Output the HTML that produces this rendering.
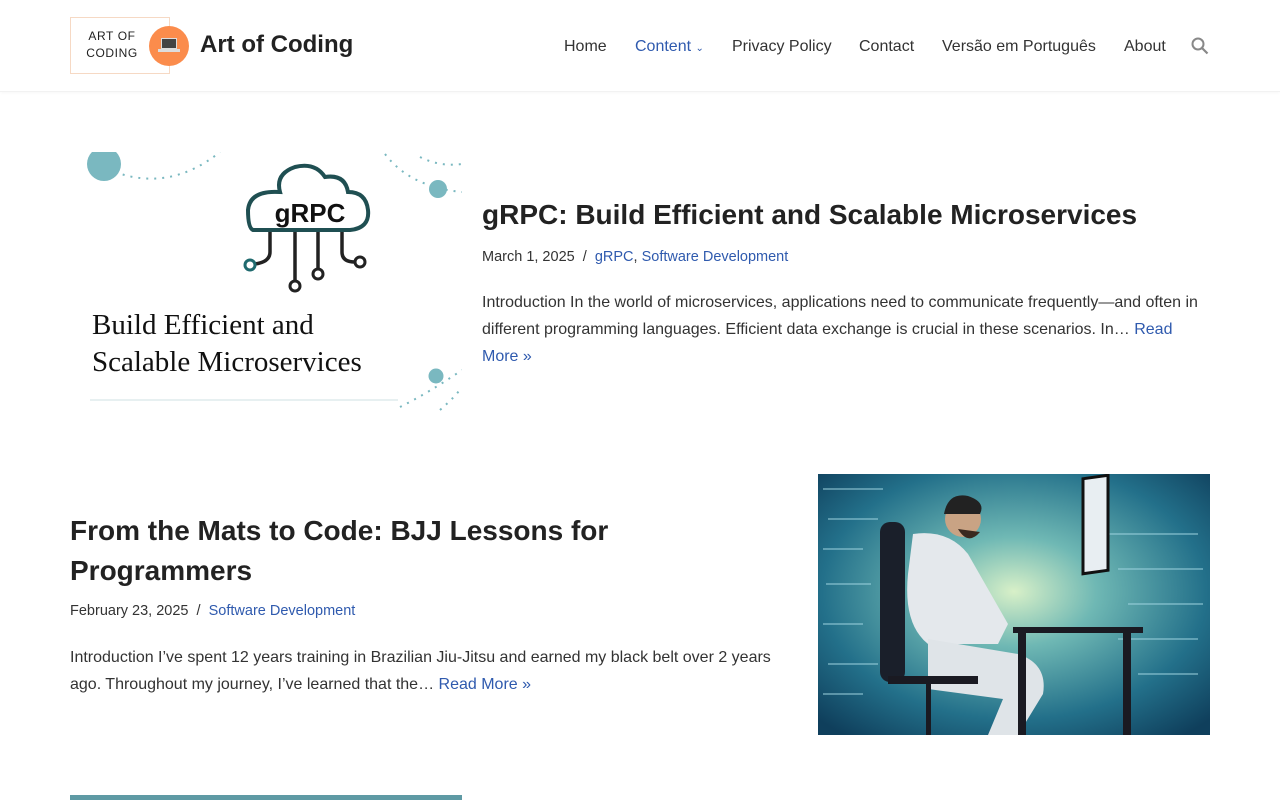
<!DOCTYPE html>
<html><head><meta charset="utf-8"><style>
*{margin:0;padding:0;box-sizing:border-box}
body{width:1280px;height:800px;overflow:hidden;background:#fff;font-family:"Liberation Sans",Arial,sans-serif;color:#404248}
a{text-decoration:none;color:#2f5aae}
.hdr{position:absolute;left:0;top:0;width:1280px;height:92px;border-bottom:1px solid #f2f2f2;box-shadow:0 1px 3px rgba(0,0,0,.03)}
.logo{position:absolute;left:70px;top:17px;width:100px;height:57px;border:1px solid #f6d9c4;font-size:12px;letter-spacing:.6px;color:#222;text-align:center;line-height:17px;padding-top:10px;padding-right:16px}
.circ{position:absolute;left:149px;top:26px;width:40px;height:40px;border-radius:50%;background:#fb8c4c}
.site{position:absolute;left:200px;top:31px;font-size:24px;font-weight:bold;color:#222}
.nav{position:absolute;top:38px;font-size:16px;color:#333}
h2{font-size:28px;font-weight:bold;color:#222;line-height:40px;position:absolute}
.meta{position:absolute;font-size:14.5px;color:#333}
.ex{position:absolute;font-size:16px;line-height:27px;color:#333}
</style></head><body>
<div class="hdr">
<div class="logo">ART OF<br>CODING</div>
<div class="circ"><div style="position:absolute;left:12px;top:12px;width:16px;height:11px;background:#444;border:1px solid #ddd"></div><div style="position:absolute;left:9px;top:23px;width:22px;height:3px;background:#ddd"></div></div>
<div class="site">Art of Coding</div>
<a class="nav" style="left:564px">Home</a>
<a class="nav" style="left:635px;color:#2f5aae">Content <span style="font-size:10px">&#8964;</span></a>
<span class="nav" style="left:732px">Privacy Policy</span>
<span class="nav" style="left:859px">Contact</span>
<span class="nav" style="left:942px">Versão em Português</span>
<span class="nav" style="left:1124px">About</span>
<svg style="position:absolute;left:1190px;top:36px" width="20" height="20" viewBox="0 0 20 20"><circle cx="8" cy="8" r="5.5" fill="none" stroke="#888" stroke-width="2"/><path d="M12 12l5.5 5.5" stroke="#888" stroke-width="2.2"/></svg>
</div>

<svg style="position:absolute;left:70px;top:152px" width="392" height="262" viewBox="0 0 392 262">
<rect width="392" height="262" fill="#fff"/>
<circle cx="34" cy="12" r="17" fill="#7ab8c0"/>
<path d="M45 20 Q100 40 150 0" fill="none" stroke="#7ab8c0" stroke-width="2" stroke-dasharray="2 6"/>
<path d="M315 2 Q340 35 392 40" fill="none" stroke="#7ab8c0" stroke-width="2" stroke-dasharray="2 6"/>
<path d="M350 5 Q370 15 392 12" fill="none" stroke="#7ab8c0" stroke-width="2" stroke-dasharray="2 6"/>
<circle cx="368" cy="37" r="9" fill="#7ab8c0"/>
<circle cx="366" cy="224" r="7.5" fill="#7ab8c0"/>
<path d="M330 255 Q360 240 392 218" fill="none" stroke="#7ab8c0" stroke-width="2" stroke-dasharray="2 6"/>
<path d="M370 258 Q385 245 392 235" fill="none" stroke="#7ab8c0" stroke-width="2" stroke-dasharray="2 6"/>
<path d="M183 78 H280 Q300 76 298 58 Q296 40 278 40 Q275 22 255 25 Q245 10 225 15 Q205 22 210 40 Q180 38 178 58 Q178 76 183 78Z" fill="none" stroke="#1f4f52" stroke-width="4"/>
<text x="240" y="70" font-family="Liberation Sans" font-weight="bold" font-size="26" fill="#111" text-anchor="middle">gRPC</text>
<path d="M200 80 V100 Q200 110 185 112 M225 80 V130 M248 80 V118 M272 80 V100 Q272 110 285 110" fill="none" stroke="#222" stroke-width="3.5"/>
<circle cx="180" cy="113" r="5" fill="none" stroke="#1f6a6e" stroke-width="3"/><circle cx="225" cy="134" r="5" fill="none" stroke="#222" stroke-width="3"/><circle cx="248" cy="122" r="5" fill="none" stroke="#222" stroke-width="3"/><circle cx="290" cy="110" r="5" fill="none" stroke="#222" stroke-width="3"/>
<text x="22" y="182" font-family="Liberation Serif" font-size="29" fill="#111">Build Efficient and</text>
<text x="22" y="219" font-family="Liberation Serif" font-size="29" fill="#111">Scalable Microservices</text>
<line x1="20" y1="248" x2="328" y2="248" stroke="#cfe1e3" stroke-width="1"/>
</svg>

<h2 style="left:482px;top:195px">gRPC: Build Efficient and Scalable Microservices</h2>
<div class="meta" style="left:482px;top:249px">March 1, 2025 &nbsp;/ &nbsp;<a>gRPC</a>, <a>Software Development</a></div>
<div class="ex" style="left:482px;top:289px;width:730px">Introduction In the world of microservices, applications need to communicate frequently—and often in different programming languages. Efficient data exchange is crucial in these scenarios. In… <a>Read More »</a></div>

<h2 style="left:70px;top:511px;width:700px">From the Mats to Code: BJJ Lessons for Programmers</h2>
<div class="meta" style="left:70px;top:603px">February 23, 2025 &nbsp;/ &nbsp;<a>Software Development</a></div>
<div class="ex" style="left:70px;top:644px;width:720px">Introduction I’ve spent 12 years training in Brazilian Jiu-Jitsu and earned my black belt over 2 years ago. Throughout my journey, I’ve learned that the… <a>Read More »</a></div>

<svg style="position:absolute;left:818px;top:474px" width="392" height="261" viewBox="0 0 392 261">
<defs><radialGradient id="g" cx="0.5" cy="0.45" r="0.7"><stop offset="0" stop-color="#d8f0c8"/><stop offset="0.3" stop-color="#6fb8b4"/><stop offset="0.7" stop-color="#23708a"/><stop offset="1" stop-color="#0f3f5c"/></radialGradient></defs>
<rect width="392" height="261" fill="url(#g)"/>
<g stroke="#9fd4e0" stroke-width="2" opacity=".5">
<path d="M5 15h60M10 45h50M5 75h40M8 110h45M5 150h40M10 190h50M5 220h40M290 60h90M300 95h85M310 130h75M300 165h80M320 200h60"/></g>
<rect x="62" y="48" width="25" height="160" rx="10" fill="#1a1f2a"/>
<path d="M95 60 Q130 55 150 80 L190 150 L180 170 L110 170 Q85 150 90 100Z" fill="#e4e8ec"/>
<path d="M110 165 L200 180 Q230 190 225 220 L200 261 L170 261 L185 225 L110 215Z" fill="#dfe4e8"/>
<circle cx="145" cy="45" r="18" fill="#c9a384"/><path d="M126 40 Q130 18 150 22 Q168 28 162 40 Z" fill="#222"/>
<path d="M140 55 Q150 72 162 58" fill="#3a2a20"/>
<rect x="265" y="42" width="25" height="95" fill="#e8eef2" stroke="#111" stroke-width="3" transform="skewY(-8)"/>
<rect x="195" y="153" width="130" height="6" fill="#1a1a22"/>
<rect x="200" y="159" width="8" height="102" fill="#1a1a22"/><rect x="305" y="159" width="8" height="102" fill="#1a1a22"/>
<rect x="70" y="202" width="90" height="8" fill="#1a1a22"/><rect x="108" y="210" width="5" height="51" fill="#1a1a22"/>
</svg>

<div style="position:absolute;left:70px;top:795px;width:392px;height:5px;background:#5e9aa4"></div>
</body></html>
